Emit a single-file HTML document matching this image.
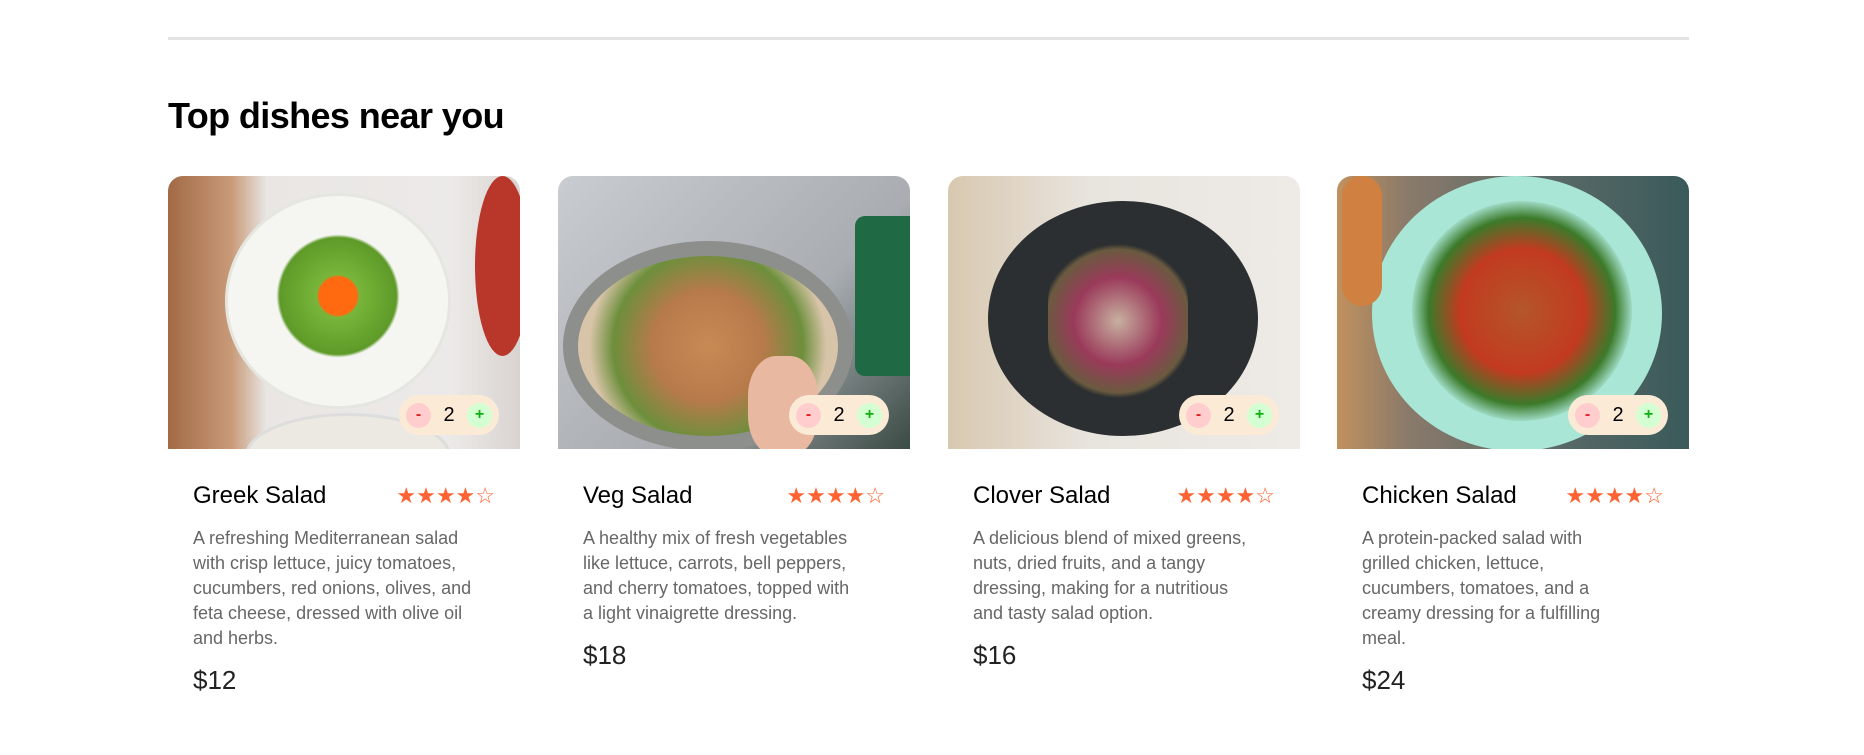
<!DOCTYPE html>
<html><head><style>
body{margin:0;background:#fff;font-family:"Liberation Sans",sans-serif;width:1864px;height:755px;overflow:hidden;position:relative}
.hr{position:absolute;left:168px;top:37px;width:1521px;height:3px;background:#e2e2e2}
h2{position:absolute;left:168px;top:95px;margin:0;font-size:36px;font-weight:bold;color:#000;letter-spacing:-0.6px}
.card{position:absolute;top:176px;width:352px}
.img{position:relative;height:273px;border-radius:15px 15px 0 0;overflow:hidden}
.cnt{position:absolute;right:21px;bottom:14px;width:100px;height:40px;border-radius:20px;background:#fbebd6;display:flex;align-items:center;justify-content:space-between;padding:0 7px;box-sizing:border-box;font-size:20px;color:#000}
.c{width:25px;height:25px;border-radius:50%;display:flex;align-items:center;justify-content:center;font-size:16px;font-weight:bold}
.m{background:#ffcdcd;color:#e02020}.p{background:#d3ffd3;color:#10b010}
.row{display:flex;justify-content:space-between;align-items:center;padding:0 25px;margin-top:33px}
.t{font-size:24px;color:#000}
.st{color:#ff6333;font-size:22px;letter-spacing:0px}
.d{padding:0 25px;margin-top:16px;font-size:18px;line-height:25px;color:#676767;white-space:nowrap}
.pr{padding:0 25px;margin-top:14px;font-size:26px;color:#222}
</style></head><body>
<div class="hr"></div>
<h2>Top dishes near you</h2>

<div class="card" style="left:168px">
<div class="img" style="background:linear-gradient(90deg,#a26a45 0,#c89a78 18%,#e9e6e4 28%,#eceae8 80%,#d9d3d0 100%)">
<div style="position:absolute;left:60px;top:20px;width:220px;height:210px;border-radius:50%;background:#f5f5f2;box-shadow:0 0 0 3px #e6e6e0"></div>
<div style="position:absolute;left:95px;top:45px;width:150px;height:150px;border-radius:50%;background:radial-gradient(circle,#ff6a10 0 18%,#77b63a 20%,#5e9a28 55%,transparent 58%)"></div>
<div style="position:absolute;right:-10px;top:0;width:55px;height:180px;border-radius:50%;background:#b8372a"></div>
<div style="position:absolute;left:80px;top:240px;width:200px;height:80px;border-radius:50%;background:#ece8e2;box-shadow:0 0 0 3px #ddd"></div>
<div class="cnt"><span class="c m">-</span>2<span class="c p">+</span></div></div>
<div class="row"><span class="t">Greek Salad</span><span class="st">★★★★☆</span></div>
<div class="d">A refreshing Mediterranean salad<br>with crisp lettuce, juicy tomatoes,<br>cucumbers, red onions, olives, and<br>feta cheese, dressed with olive oil<br>and herbs.</div>
<div class="pr">$12</div></div>

<div class="card" style="left:558px">
<div class="img" style="background:linear-gradient(135deg,#c9cdd1,#a9adb2 60%,#3a4a44)">
<div style="position:absolute;left:5px;top:65px;width:290px;height:210px;border-radius:50%;background:#8c8f8c"></div>
<div style="position:absolute;left:20px;top:80px;width:260px;height:180px;border-radius:50%;background:radial-gradient(circle,#c88a55 0,#b77a4a 35%,#6d8f3c 60%,#d8c4a8 75%)"></div>
<div style="position:absolute;right:0;top:40px;width:55px;height:160px;background:#1f6a45;border-radius:10px 0 0 10px"></div>
<div style="position:absolute;left:190px;top:180px;width:70px;height:100px;border-radius:40%;background:#e8b8a0"></div>
<div class="cnt"><span class="c m">-</span>2<span class="c p">+</span></div></div>
<div class="row"><span class="t">Veg Salad</span><span class="st">★★★★☆</span></div>
<div class="d">A healthy mix of fresh vegetables<br>like lettuce, carrots, bell peppers,<br>and cherry tomatoes, topped with<br>a light vinaigrette dressing.</div>
<div class="pr">$18</div></div>

<div class="card" style="left:948px">
<div class="img" style="background:linear-gradient(90deg,#d8c8b0,#e8e4de 40%,#eeeae6)">
<div style="position:absolute;left:40px;top:25px;width:270px;height:235px;border-radius:50%;background:#2c2f31"></div>
<div style="position:absolute;left:100px;top:60px;width:140px;height:170px;border-radius:40%;background:radial-gradient(circle,#c8b0a0 0,#9a3a5a 40%,#6a5a40 65%,transparent 70%)"></div>
<div class="cnt"><span class="c m">-</span>2<span class="c p">+</span></div></div>
<div class="row"><span class="t">Clover Salad</span><span class="st">★★★★☆</span></div>
<div class="d">A delicious blend of mixed greens,<br>nuts, dried fruits, and a tangy<br>dressing, making for a nutritious<br>and tasty salad option.</div>
<div class="pr">$16</div></div>

<div class="card" style="left:1337px">
<div class="img" style="background:linear-gradient(90deg,#c0915e 0,#8a7a6a 20%,#5a6a68 60%,#3a5a5a)">
<div style="position:absolute;left:35px;top:0;width:290px;height:275px;border-radius:50%;background:#a9e6d6"></div>
<div style="position:absolute;left:75px;top:25px;width:220px;height:220px;border-radius:50%;background:radial-gradient(circle,#b4562a 0,#c23a20 40%,#3c7a2a 60%,transparent 72%)"></div>
<div style="position:absolute;left:5px;top:0;width:40px;height:130px;border-radius:20px;background:#d08040"></div>
<div class="cnt"><span class="c m">-</span>2<span class="c p">+</span></div></div>
<div class="row"><span class="t">Chicken Salad</span><span class="st">★★★★☆</span></div>
<div class="d">A protein-packed salad with<br>grilled chicken, lettuce,<br>cucumbers, tomatoes, and a<br>creamy dressing for a fulfilling<br>meal.</div>
<div class="pr">$24</div></div>
</body></html>
